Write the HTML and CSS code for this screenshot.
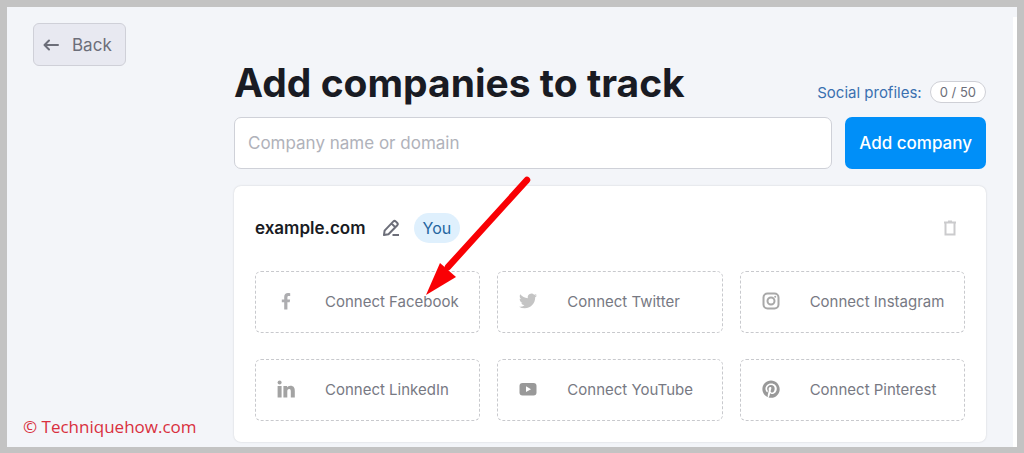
FILE: index.html
```html
<!DOCTYPE html>
<html lang="en">
<head>
<meta charset="utf-8">
<title>Add companies to track</title>
<link rel="stylesheet" href="styles.css">
</head>
<body>
<div class="page">
  <aside class="side">
    <button class="back" type="button">
      <svg width="16" height="14" viewBox="0 0 16 14" fill="none" stroke="currentColor" stroke-width="2" stroke-linecap="round" stroke-linejoin="round" aria-hidden="true"><path d="M15 7H2M6 2.500L1.500 7L6 11.500"/></svg>
      Back
    </button>
    <p class="credit">© Techniquehow.com</p>
  </aside>
  <main class="main">
    <header class="head">
      <h1 class="title">Add companies to track</h1>
      <div class="profiles"><a class="profiles-link" href="#">Social profiles:</a><span class="count">0 / 50</span></div>
    </header>
    <form class="add">
      <input class="field" type="text" placeholder="Company name or domain" aria-label="Company name or domain">
      <button class="submit" type="button">Add company</button>
    </form>
    <section class="card">
      <div class="card-head">
        <h2 class="domain">example.com</h2>
        <button class="icon-button edit" type="button" aria-label="Edit">
          <svg width="18" height="18" viewBox="0 0 18 18" fill="none" stroke="currentColor" stroke-width="2" stroke-linejoin="round" aria-hidden="true"><path d="M2 16L2.600 11.600L11.400 2.400Q12.500 1.300 13.700 2.400L15.300 4Q16.300 5.100 15.300 6.200L6.500 15.200ZM9.500 4.500L13.200 8.100M10.500 16H17"/></svg>
        </button>
        <span class="you">You</span>
        <button class="icon-button trash" type="button" aria-label="Delete">
          <svg width="14" height="16" viewBox="0 0 14 16" fill="none" stroke="currentColor" stroke-width="2" aria-hidden="true"><path d="M1 2.500H13M5 1.500H9M2.500 3V14.500H11.500V3"/></svg>
        </button>
      </div>
      <div class="tiles">
        <button class="tile" type="button">
          <svg class="mark" viewBox="0 0 18 18" aria-hidden="true"><path fill="#adadb0" d="M7.200 17.500V10.300H4.800V7.400H7.200V5C7.200 2.500 8.600 1 11 1C12 1 12.900 1.100 13.200 1.200V4H11.800C10.700 4 10.400 4.600 10.400 5.400V7.400H13.100L12.700 10.300H10.400V17.500Z"/></svg>
          Connect Facebook
        </button>
        <button class="tile" type="button">
          <svg class="mark" viewBox="0 0 24 24" aria-hidden="true"><path fill="#c4c4c4" d="M23.950 4.570a10 10 0 0 1-2.820.77 4.960 4.960 0 0 0 2.160-2.720c-.950.560-2 .960-3.120 1.180a4.920 4.920 0 0 0-8.380 4.480C7.690 8.090 4.070 6.130 1.640 3.160a4.820 4.820 0 0 0-.67 2.480c0 1.710.870 3.210 2.190 4.100a4.900 4.900 0 0 1-2.230-.62v.06a4.920 4.920 0 0 0 3.950 4.830 5 5 0 0 1-2.210.08 4.940 4.940 0 0 0 4.600 3.420A9.870 9.870 0 0 1 0 19.540a13.990 13.990 0 0 0 7.560 2.210c9.050 0 14-7.500 14-13.980 0-.21 0-.42-.02-.63a9.940 9.940 0 0 0 2.460-2.550z"/></svg>
          Connect Twitter
        </button>
        <button class="tile" type="button">
          <svg class="mark" viewBox="0 0 18 18" fill="none" stroke="#a8a8a8" stroke-width="2" aria-hidden="true"><rect x="1.500" y="1.500" width="15" height="15" rx="4"/><circle cx="9" cy="9" r="3.500"/><circle cx="13.200" cy="4.800" r="1" fill="#a8a8a8" stroke="none"/></svg>
          Connect Instagram
        </button>
        <button class="tile" type="button">
          <svg class="mark" viewBox="0 0 18 18" fill="#a3a3a3" aria-hidden="true"><circle cx="2.600" cy="2.400" r="2"/><path d="M.600 6H4.600V17.400H.600ZM6.400 6H10V7.500C10.600 6.400 11.800 5.700 13.400 5.700C16.800 5.700 17.800 7.900 17.800 10.900V17.400H13.800V11.700C13.800 10.200 13.600 9 12.200 9C10.700 9 10.300 10.100 10.300 11.600V17.400H6.400Z"/></svg>
          Connect LinkedIn
        </button>
        <button class="tile" type="button">
          <svg class="mark" viewBox="0 0 18 18" aria-hidden="true"><rect x=".500" y="3" width="17" height="12.500" rx="3" fill="#999"/><path fill="#fff" d="M7 6.300V12L12 9.200Z"/></svg>
          Connect YouTube
        </button>
        <button class="tile" type="button">
          <svg class="mark" viewBox="0 0 24 24" aria-hidden="true"><path fill="#999" d="M12 .500C5.600.500.500 5.600.500 12c0 4.900 3 9 7.300 10.700-.1-.9-.2-2.300 0-3.300l1.400-5.700s-.3-.7-.3-1.700c0-1.600.9-2.800 2.100-2.800 1 0 1.500.7 1.500 1.600 0 1-.6 2.500-1 3.900-.3 1.100.6 2.100 1.700 2.100 2.100 0 3.700-2.200 3.700-5.300 0-2.800-2-4.700-4.900-4.700-3.300 0-5.200 2.500-5.200 5 0 1 .4 2.100.9 2.600.1.100.1.200.1.400l-.4 1.400c0 .2-.2.300-.4.200-1.500-.7-2.400-2.800-2.400-4.600 0-3.700 2.700-7.200 7.800-7.200 4.100 0 7.300 2.900 7.300 6.800 0 4.100-2.600 7.400-6.100 7.400-1.200 0-2.300-.6-2.700-1.400l-.7 2.800c-.3 1-1 2.300-1.500 3.100 1.100.3 2.200.5 3.400.5 6.400 0 11.500-5.100 11.500-11.500S18.400.500 12 .500z"/></svg>
          Connect Pinterest
        </button>
      </div>
    </section>
  </main>
  <svg class="arrow" width="108" height="120" viewBox="0 0 108 120" aria-hidden="true"><path d="M103 4L24 91" stroke="#f90004" stroke-width="6.500" stroke-linecap="round"/><path d="M2 119L16 87L32 101Z" fill="#f90004"/></svg>
</div>
</body>
</html>
```
FILE: styles.css
```css
* {
  box-sizing: border-box;
}

body {
  margin: 0;
  font-family: Inter, "Liberation Sans", sans-serif;
  font-size: 15px;
  color: #6c6e79;
}

button,
input {
  font: inherit;
  color: inherit;
}

h1,
h2,
p {
  margin: 0;
}

.page {
  position: relative;
  display: flex;
  min-height: 100vh;
  padding: 16px 31px 4px 26px;
  border: 7px solid #c3c3c3;
  border-bottom-width: 6px;
  background: linear-gradient(#fff, #fff) right 10px / 4px 100% no-repeat #f3f5f9;
}

.side {
  display: flex;
  flex: 0 0 201px;
  flex-direction: column;
  align-items: flex-start;
  justify-content: space-between;
}

.back {
  display: flex;
  align-items: center;
  gap: 13px;
  height: 43px;
  padding: 0 13px 0 9px;
  border: 1px solid #cfd0d8;
  border-radius: 6px;
  background: #e8e9f1;
  font-size: 17px;
}

.credit {
  margin: 0 -10px 4px;
  color: #d9303e;
  font-family: "Open Sans", "Noto Sans", sans-serif;
  font-size: 17px;
  line-height: 24px;
  white-space: nowrap;
}

.main {
  flex: 1;
  min-width: 0;
  padding-top: 36px;
}

.head {
  display: flex;
  align-items: flex-end;
  justify-content: space-between;
}

.title {
  color: #191b23;
  font-size: 39px;
  font-weight: 700;
  line-height: 48px;
}

.profiles {
  display: flex;
  align-items: center;
  gap: 8px;
  padding-bottom: 4px;
}

.profiles-link {
  color: #3a70b0;
  text-decoration: none;
}

.count {
  padding: 0 9px;
  border: 1px solid #cfd0d6;
  border-radius: 11px;
  background: #fff;
  font-size: 13px;
  line-height: 20px;
}

.add {
  display: flex;
  gap: 13px;
  margin-top: 10px;
}

.field {
  flex: 1;
  min-width: 0;
  height: 52px;
  padding: 0 13px;
  border: 1px solid #cfd1d8;
  border-radius: 7px;
  background: #fff;
  font-size: 17px;
}

.field::placeholder {
  color: #b0b2ba;
  opacity: 1;
}

.submit {
  padding: 0 14px;
  border: 0;
  border-radius: 7px;
  background: #008ff8;
  color: #fff;
  font-size: 17px;
  font-weight: 500;
}

.card {
  margin-top: 17px;
  padding: 27px 21px 21px;
  border-radius: 7px;
  background: #fff;
  box-shadow: 0 0 2px rgba(25, 27, 35, 0.18);
}

.card-head {
  display: flex;
  align-items: center;
  margin-bottom: 28px;
}

.domain {
  color: #191b23;
  font-size: 17px;
  font-weight: 600;
}

.icon-button {
  display: flex;
  padding: 0;
  border: 0;
  background: none;
}

.edit {
  margin: 0 14px 0 16px;
}

.trash {
  margin-left: auto;
  margin-right: 8px;
  color: #cbcbcd;
}

.you {
  padding: 0 9px;
  border-radius: 15px;
  background: #dff0fd;
  color: #2465a0;
  font-size: 16px;
  line-height: 30px;
}

.tiles {
  display: grid;
  grid-template-columns: repeat(3, minmax(0, 1fr));
  gap: 26px 17px;
}

.tile {
  display: flex;
  align-items: center;
  gap: 30px;
  height: 62px;
  padding: 0 20px 2px 21px;
  border: 1px dashed #c8c9cd;
  border-radius: 6px;
  background: none;
  color: #777983;
  white-space: nowrap;
}

.mark {
  flex: none;
  width: 18px;
  height: 18px;
}

.arrow {
  position: absolute;
  top: 169px;
  left: 417px;
  pointer-events: none;
}
```
